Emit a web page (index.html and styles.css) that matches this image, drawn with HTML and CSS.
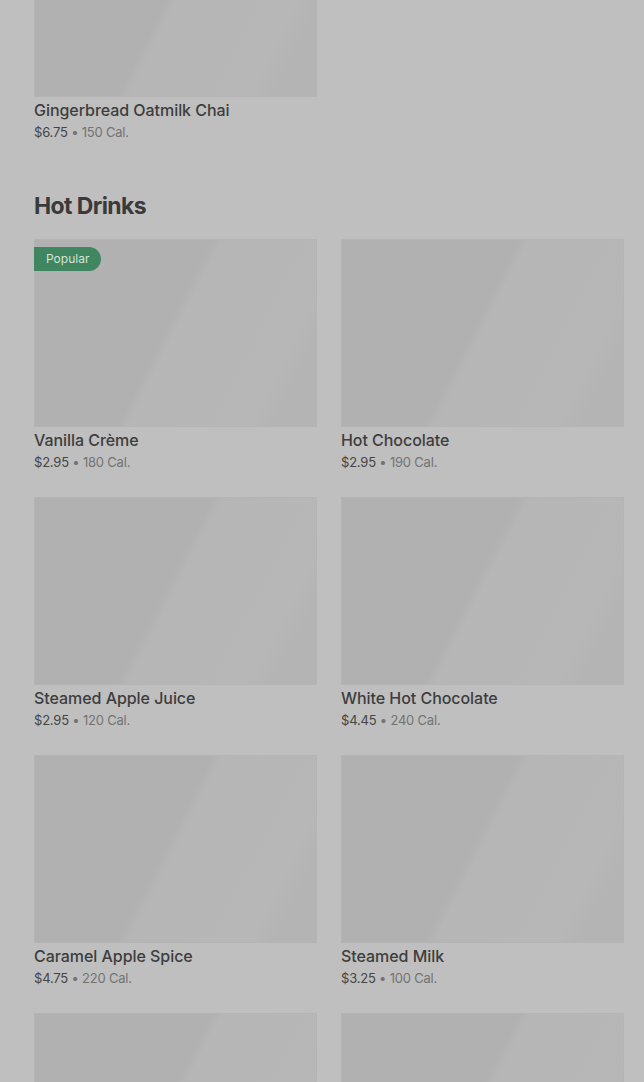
FILE: index.html
```html
<!DOCTYPE html>
<html lang="en">

<head>
    <meta charset="UTF-8">
    <meta name="viewport" content="width=device-width, initial-scale=1.0">
    <title>Menu</title>
    <link rel="stylesheet" href="styles.css">
</head>

<body>

    <div class="menu">

        <!-- previous section (scrolled) -->
        <div class="grid grid-top">
            <div class="item">
                <div class="thumb"></div>
                <div class="name">Gingerbread Oatmilk Chai</div>
                <div class="meta"><span class="price">$6.75</span> • 150 Cal.</div>
            </div>
        </div>

        <h2 class="section-title">Hot Drinks</h2>

        <div class="grid">
            <div class="item">
                <div class="thumb">
                    <span class="badge">Popular</span>
                </div>
                <div class="name">Vanilla Crème</div>
                <div class="meta"><span class="price">$2.95</span> • 180 Cal.</div>
            </div>
            <div class="item">
                <div class="thumb"></div>
                <div class="name">Hot Chocolate</div>
                <div class="meta"><span class="price">$2.95</span> • 190 Cal.</div>
            </div>
            <div class="item">
                <div class="thumb"></div>
                <div class="name">Steamed Apple Juice</div>
                <div class="meta"><span class="price">$2.95</span> • 120 Cal.</div>
            </div>
            <div class="item">
                <div class="thumb"></div>
                <div class="name">White Hot Chocolate</div>
                <div class="meta"><span class="price">$4.45</span> • 240 Cal.</div>
            </div>
            <div class="item">
                <div class="thumb"></div>
                <div class="name">Caramel Apple Spice</div>
                <div class="meta"><span class="price">$4.75</span> • 220 Cal.</div>
            </div>
            <div class="item">
                <div class="thumb"></div>
                <div class="name">Steamed Milk</div>
                <div class="meta"><span class="price">$3.25</span> • 100 Cal.</div>
            </div>
            <div class="item">
                <div class="thumb"></div>
            </div>
            <div class="item">
                <div class="thumb"></div>
            </div>
        </div>

    </div>

</body>

</html>
```

FILE: styles.css
```css
html,
body {
    margin: 0;
    background-color: #bfbfbf;
    overflow: hidden;
}

body {
    font-family: Inter, "Liberation Sans", sans-serif;
    height: 1082px;
}

.menu {
    padding: 0 20px 0 34px;
    margin-top: -91px;
}

.grid {
    display: grid;
    grid-template-columns: 283px 283px;
    column-gap: 24px;
    row-gap: 26px;
}

/* skeleton placeholder image */
.thumb {
    position: relative;
    height: 188px;
    background: linear-gradient(117deg, #b1b1b1 0%, #b1b1b1 47%, #b6b6b6 50%, #b7b7b7 82%, #b4b4b4 88%);
    box-shadow: inset 0 0 0 1px #b4b4b4;
}

/* Popular tag on the top-left of an image */
.badge {
    position: absolute;
    top: 8px;
    left: 0;
    height: 24px;
    line-height: 24px;
    padding: 0 12px;
    background-color: #3f8661;
    color: #d3e4d9;
    font-size: 12px;
    border-radius: 0 12px 12px 0;
}

.name {
    margin-top: 3px;
    font-size: 16px;
    line-height: 20px;
    font-weight: 500;
    color: #3d3d3d;
    letter-spacing: -0.05px;
}

.meta {
    margin-top: 3px;
    font-size: 13px;
    line-height: 18px;
    color: #737373;
    letter-spacing: -0.2px;
}

.price {
    color: #454545;
}

.section-title {
    margin: 49px 0 17px;
    font-size: 23px;
    line-height: 32px;
    font-weight: 700;
    color: #3a3a3a;
    letter-spacing: -0.6px;
}
```
